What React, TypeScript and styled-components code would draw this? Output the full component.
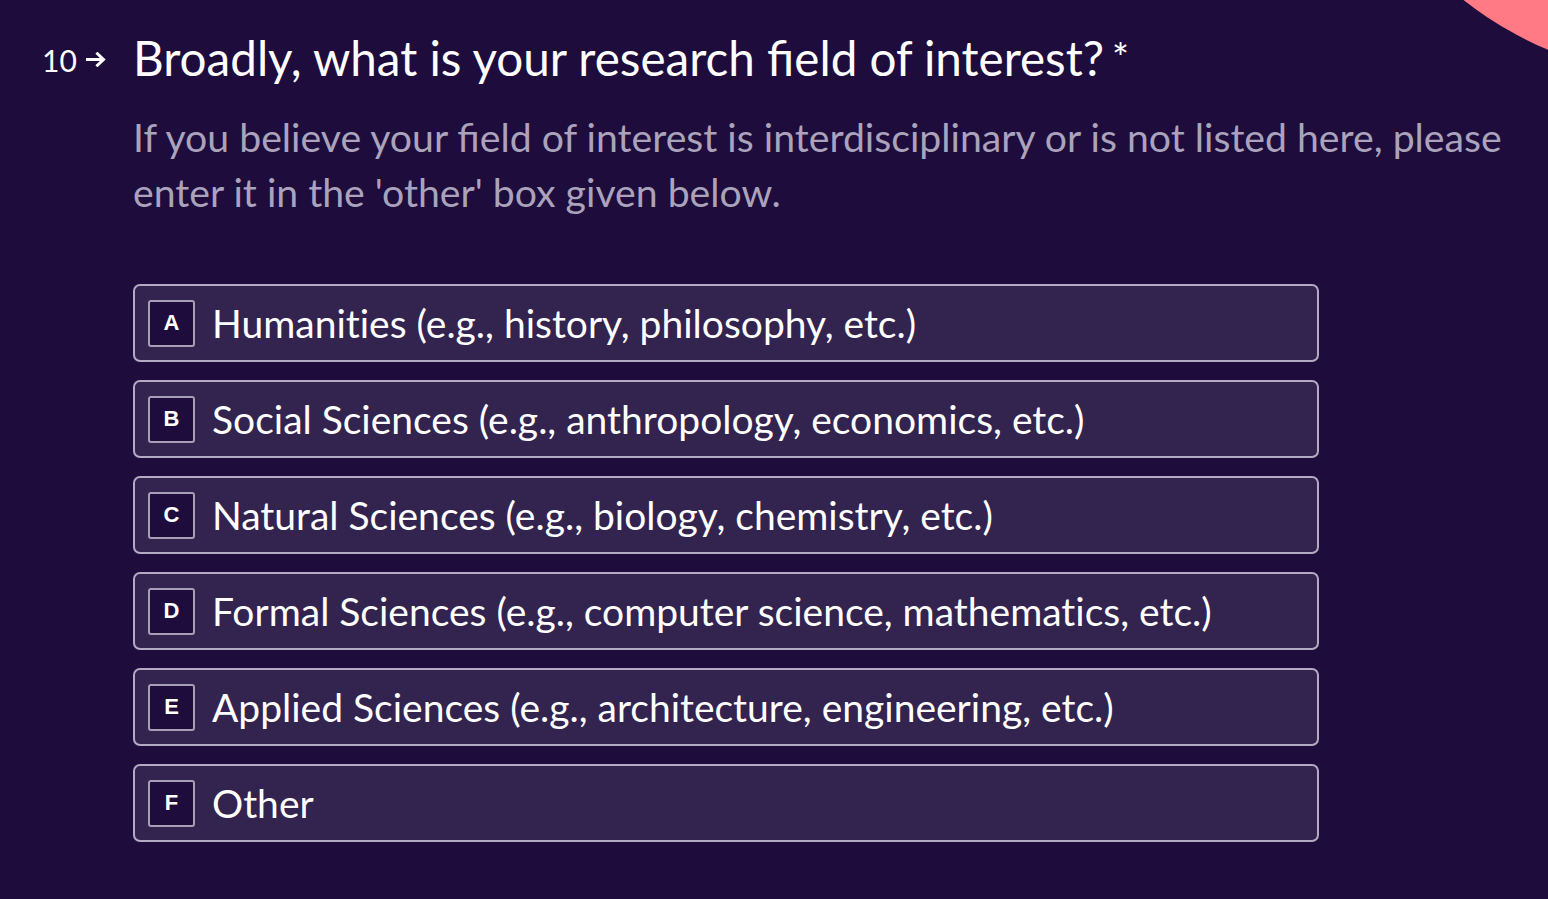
import React from 'react';
import styled, { createGlobalStyle } from 'styled-components';

const GlobalStyle = createGlobalStyle`
  html, body {
    margin: 0;
    padding: 0;
    background: #1d0c3c;
  }
  body {
    font-family: Lato, "Open Sans", sans-serif;
    color: #ffffff;
    overflow: hidden;
  }
`;

const Page = styled.div`
  position: relative;
  width: 1548px;
  height: 899px;
  overflow: hidden;
  background: #1d0c3c;
`;

// decorative circle peeking in from the top-right corner
const Blob = styled.div`
  position: absolute;
  left: 1322px;
  top: -661px;
  width: 740px;
  height: 740px;
  border-radius: 50%;
  background: #ff7a85;
`;

const QuestionRow = styled.div`
  display: flex;
  padding: 28px 0 0 42px;
`;

const Counter = styled.div`
  width: 91px;
  flex-shrink: 0;
  display: flex;
  align-items: center;
  box-sizing: border-box;
  height: 62px;
  padding-top: 1px;
  gap: 8px;
  font-size: 30px;
  line-height: 60px;
  color: #ffffff;
`;

const Body = styled.div`
  flex: 1;
  min-width: 0;
`;

const Title = styled.h1`
  margin: 0;
  font-size: 47.6px;
  font-weight: 400;
  line-height: 60px;
  color: #ffffff;
`;

const Star = styled.span`
  margin-left: 8px;
  vertical-align: 3px;
  font-size: 40px;
`;

const Description = styled.p`
  margin: 21px 0 0;
  font-size: 39.2px;
  line-height: 55px;
  color: #aaa3bb;
`;

const Choices = styled.div`
  display: flex;
  flex-direction: column;
  gap: 18px;
  margin-top: 65px;
  width: 1186px;
`;

const Choice = styled.div`
  display: flex;
  align-items: center;
  gap: 17px;
  height: 78px;
  box-sizing: border-box;
  padding: 0 13px;
  border: 2px solid #b3abc3;
  border-radius: 7px;
  background: #33234f;
`;

const Key = styled.span`
  width: 47px;
  height: 47px;
  box-sizing: border-box;
  display: flex;
  align-items: center;
  justify-content: center;
  border: 2px solid #a79fb6;
  border-radius: 3px;
  background: #1d0c3c;
  font-family: "Liberation Sans", Arial, sans-serif;
  font-weight: 700;
  font-size: 22px;
  color: #ffffff;
`;

const Label = styled.span`
  font-size: 39px;
  line-height: 1;
  color: #ffffff;
  font-variant-ligatures: no-common-ligatures;
`;

const Arrow = () => (
  <svg width="21" height="15" viewBox="0 0 21 15" fill="none" stroke="#ffffff" strokeWidth="3">
    <path d="M1 7.5h17" />
    <path d="M12.5 1.8l6 5.7-6 5.7" strokeLinecap="square" strokeLinejoin="miter" />
  </svg>
);

const options = [
  'Humanities (e.g., history, philosophy, etc.)',
  'Social Sciences (e.g., anthropology, economics, etc.)',
  'Natural Sciences (e.g., biology, chemistry, etc.)',
  'Formal Sciences (e.g., computer science, mathematics, etc.)',
  'Applied Sciences (e.g., architecture, engineering, etc.)',
  'Other',
];

const App: React.FC = () => {
  return (
    <Page>
      <GlobalStyle />
      <Blob />
      <QuestionRow>
        <Counter>
          10
          <Arrow />
        </Counter>
        <Body>
          <Title>
            Broadly, what is your research field of interest?<Star>*</Star>
          </Title>
          <Description>
            If you believe your field of interest is interdisciplinary or is not listed here, please
            <br />
            enter it in the 'other' box given below.
          </Description>
          <Choices>
            {options.map((text, i) => (
              <Choice key={text}>
                <Key>{String.fromCharCode(65 + i)}</Key>
                <Label>{text}</Label>
              </Choice>
            ))}
          </Choices>
        </Body>
      </QuestionRow>
    </Page>
  );
};

export default App;
